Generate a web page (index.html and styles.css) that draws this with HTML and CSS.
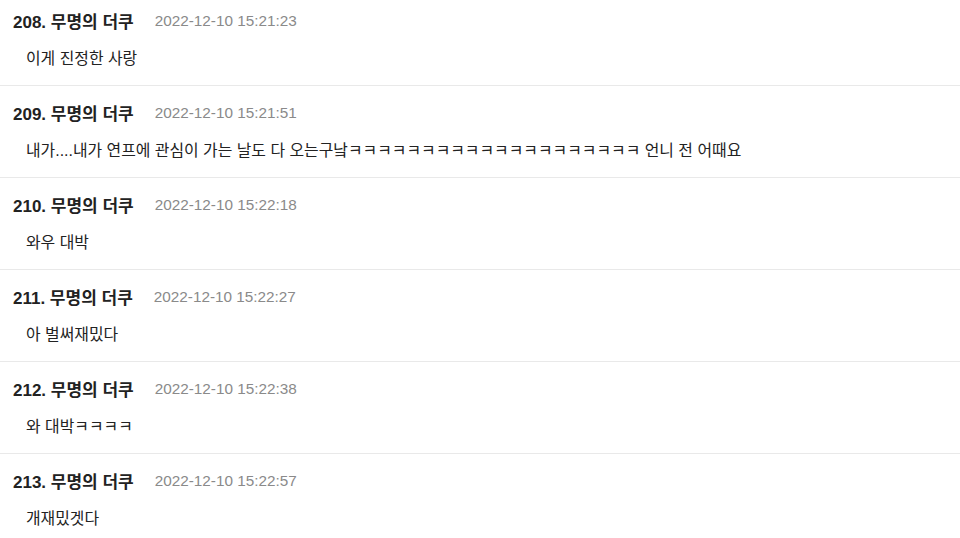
FILE: index.html
```html
<!DOCTYPE html>
<html lang="ko">
<head>
<meta charset="utf-8">
<link rel="stylesheet" href="styles.css">
</head>
<body>
<ul class="comments">
  <li class="comment">
    <div class="meta"><span class="name">208. 무명의 더쿠</span><span class="date">2022-12-10 15:21:23</span></div>
    <p class="text">이게 진정한 사랑</p>
  </li>
  <li class="comment">
    <div class="meta"><span class="name">209. 무명의 더쿠</span><span class="date">2022-12-10 15:21:51</span></div>
    <p class="text">내가....내가 연프에 관심이 가는 날도 다 오는구낰ㅋㅋㅋㅋㅋㅋㅋㅋㅋㅋㅋㅋㅋㅋㅋㅋㅋㅋㅋㅋ 언니 전 어때요</p>
  </li>
  <li class="comment">
    <div class="meta"><span class="name">210. 무명의 더쿠</span><span class="date">2022-12-10 15:22:18</span></div>
    <p class="text">와우 대박</p>
  </li>
  <li class="comment">
    <div class="meta"><span class="name">211. 무명의 더쿠</span><span class="date">2022-12-10 15:22:27</span></div>
    <p class="text">아 벌써재밌다</p>
  </li>
  <li class="comment">
    <div class="meta"><span class="name">212. 무명의 더쿠</span><span class="date">2022-12-10 15:22:38</span></div>
    <p class="text">와 대박ㅋㅋㅋㅋ</p>
  </li>
  <li class="comment">
    <div class="meta"><span class="name">213. 무명의 더쿠</span><span class="date">2022-12-10 15:22:57</span></div>
    <p class="text">개재밌겟다</p>
  </li>
</ul>
</body>
</html>
```
FILE: styles.css
```css
html, body {
  margin: 0;
  padding: 0;
  background: #fff;
}
body {
  font-family: "Liberation Sans", "Noto Sans CJK KR", sans-serif;
  color: #222;
  overflow: hidden;
}
.comments {
  list-style: none;
  margin: 0;
  padding: 0;
}
.comment {
  padding: 14px 13px 15px;
  border-bottom: 1px solid #e9e9e9;
}
.comment:first-child {
  padding-top: 8px;
}
.meta {
  display: flex;
  align-items: center;
  gap: 21px;
  height: 24px;
}
.name {
  font-size: 17px;
  font-weight: bold;
  color: #222;
}
.date {
  font-size: 15.3px;
  color: #8a8a8a;
  padding-top: 2px;
}
.text {
  margin: 15px 0 -1px;
  padding-left: 13px;
  font-size: 15.9px;
  line-height: 24px;
  color: #222;
}
```
